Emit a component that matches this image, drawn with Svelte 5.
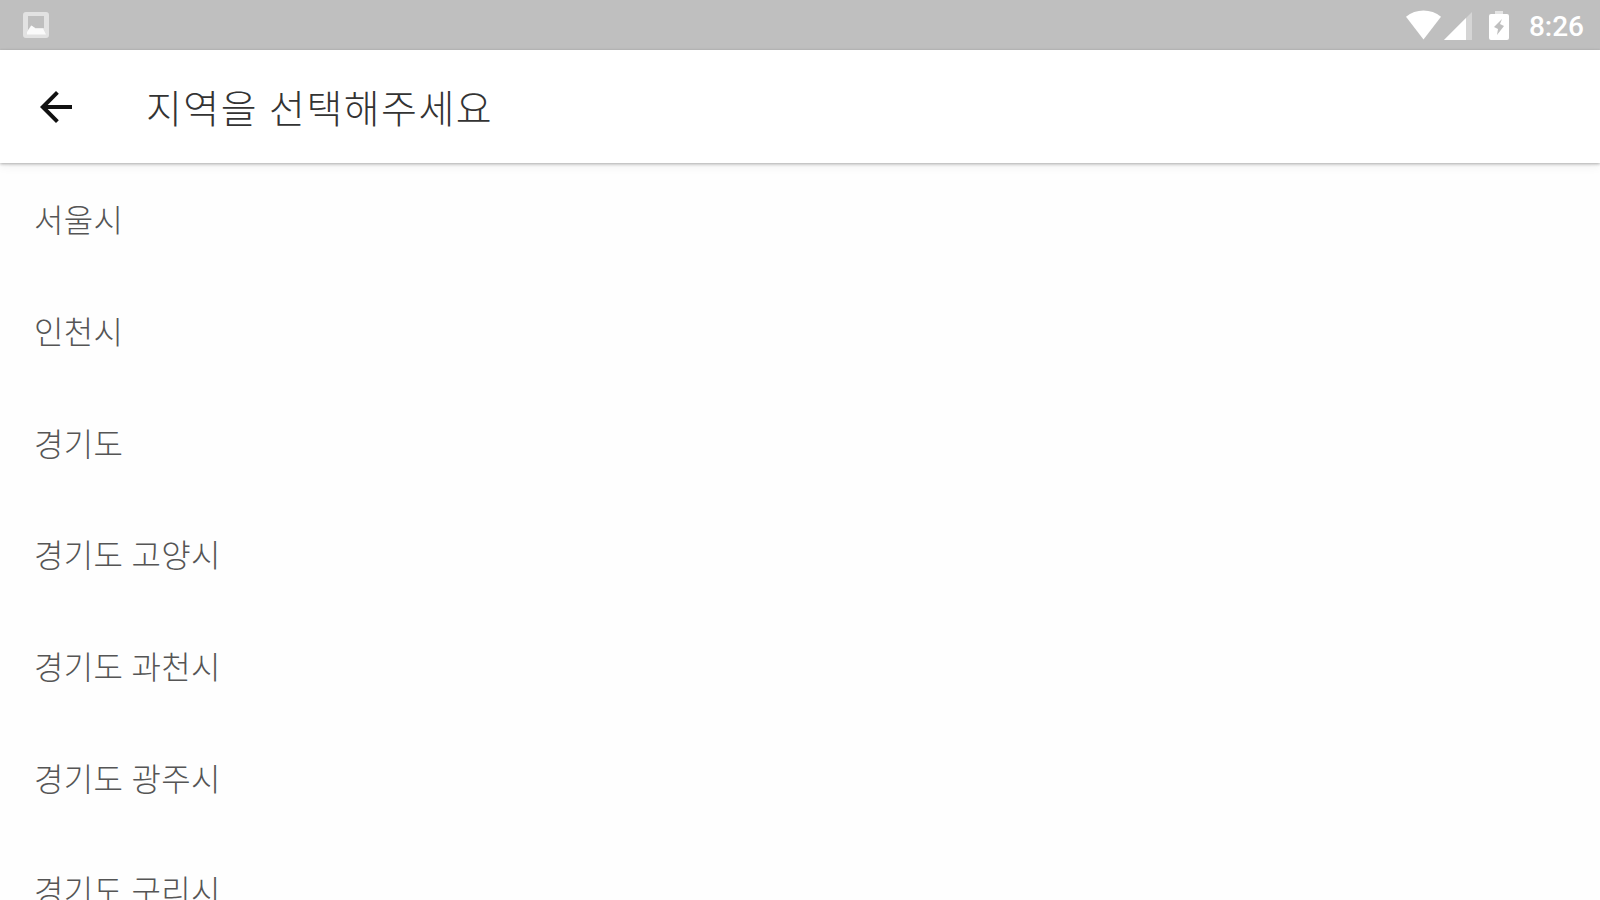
<script lang="ts">
  interface Props {
    title?: string;
    time?: string;
  }

  let { title = "지역을 선택해주세요", time = "8:26" }: Props = $props();

  const regions = [
    "서울시",
    "인천시",
    "경기도",
    "경기도 고양시",
    "경기도 과천시",
    "경기도 광주시",
    "경기도 구리시",
  ];
</script>

<div class="screen">
  <div class="status">
    <svg class="picture" viewBox="0 0 26 26" aria-hidden="true">
      <path
        opacity="0.6"
        fill-rule="evenodd"
        d="M3 0h20a3 3 0 0 1 3 3v20a3 3 0 0 1-3 3H3a3 3 0 0 1-3-3V3a3 3 0 0 1 3-3zM5 4v14l3-4.500 4.500 2.500H21V4z"
      />
      <path d="M4 20l4.500-6.500 4 3H20l3 6H4z" />
    </svg>
    <div class="indicators">
      <svg class="wifi" viewBox="0 0 36 30" aria-hidden="true">
        <path d="M0 6.500C10-2.200 26-2.200 36 6.500L18 30z" />
      </svg>
      <svg class="signal" viewBox="0 0 28 28" aria-hidden="true">
        <path opacity="0.35" d="M28 0v28H0z" />
        <path d="M22 6v22H0z" />
      </svg>
      <svg class="battery" viewBox="0 0 20 29" aria-hidden="true">
        <path opacity="0.6" d="M6 0h8v3H6z" />
        <path
          fill-rule="evenodd"
          d="M2 3h16a2 2 0 0 1 2 2v22a2 2 0 0 1-2 2H2a2 2 0 0 1-2-2V5a2 2 0 0 1 2-2zM13 8l-8 8 4 2-1 6 7-9-4-2z"
        />
      </svg>
      <span class="time">{time}</span>
    </div>
  </div>

  <header class="toolbar">
    <button class="back" aria-label="뒤로">
      <svg viewBox="0 0 32 32" aria-hidden="true">
        <path d="M32 14H7.700L18.800 2.800 16 0 0 16l16 16 2.800-2.800L7.700 18H32z" />
      </svg>
    </button>
    <h1>{title}</h1>
  </header>

  <ul class="regions">
    {#each regions as region (region)}
      <li>{region}</li>
    {/each}
  </ul>
</div>

<style>
  :global(body) {
    overflow: hidden;
  }

  .screen {
    display: flex;
    flex-direction: column;
    height: 100vh;
    overflow: hidden;
    background: #fefefe;
    font-family: "Noto Sans CJK KR", sans-serif;
    font-weight: 300;
  }

  .status {
    flex: none;
    display: flex;
    align-items: center;
    justify-content: space-between;
    box-sizing: border-box;
    height: 50px;
    padding: 0 16px 0 23px;
    background: #bfbfbf;
  }
  .status svg {
    display: block;
    fill: #fff;
  }

  .picture {
    width: 26px;
    height: 26px;
    opacity: 0.92;
  }

  .indicators {
    display: flex;
    align-items: center;
  }
  .wifi {
    width: 35px;
    height: 30px;
  }
  .signal {
    width: 28px;
    height: 28px;
    margin: 1px 0 0 3px;
  }
  .battery {
    width: 20px;
    height: 29px;
    margin: 1px 20px 0 17px;
  }
  .time {
    padding-top: 3px;
    color: #fff;
    font: 500 28px/50px Roboto, sans-serif;
  }

  .toolbar {
    position: relative; /* keeps the shadow above the list */
    flex: none;
    display: flex;
    align-items: center;
    height: 113px;
    background: #fff;
    box-shadow: 0 1px 3px rgba(0, 0, 0, 0.3), 0 4px 9px rgba(0, 0, 0, 0.05);
  }

  .back {
    margin: 0 74px 0 40px;
    padding: 0;
    border: none;
    background: none;
    cursor: pointer;
  }
  .back svg {
    display: block;
    width: 32px;
    height: 32px;
    fill: #111;
  }

  h1 {
    margin: 0;
    padding-bottom: 2px;
    color: #333;
    font-size: 39px;
    font-weight: 300;
    line-height: 56px;
    letter-spacing: 1.45px;
    word-spacing: 1px;
  }

  .regions {
    margin: 0;
    padding: 0;
    list-style: none;
  }
  .regions li {
    padding-left: 34px;
    color: #555;
    font-size: 32px;
    line-height: 111.8px;
    letter-spacing: 0.3px;
    word-spacing: 1px;
    white-space: nowrap;
  }
</style>
